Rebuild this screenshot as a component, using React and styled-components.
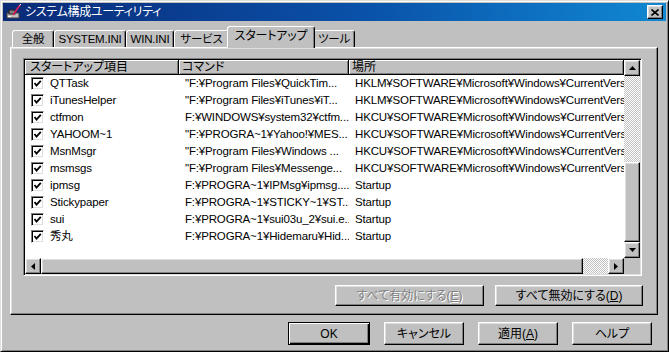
import React from 'react';
import styled, { createGlobalStyle, css } from 'styled-components';

const GlobalStyle = createGlobalStyle`
  body {
    margin: 0;
    background: #c0c0c0;
    font-family: "Liberation Sans", "Noto Sans CJK JP", sans-serif;
    font-size: 12px;
    font-feature-settings: "palt";
  }
  * { box-sizing: border-box; }
`;

const raised = css`
  border: 1px solid;
  border-color: #fff #000 #000 #fff;
  box-shadow: inset -1px -1px #808080, inset 1px 1px #dfdfdf;
  background: #c0c0c0;
`;

const Window = styled.div`
  width: 669px;
  height: 352px;
  background: #c0c0c0;
  border: 1px solid;
  border-color: #dfdfdf #000 #000 #dfdfdf;
  box-shadow: inset 1px 1px #fff, inset -1px -1px #808080;
  padding: 2px;
  display: flex;
  flex-direction: column;
`;

const TitleBar = styled.div`
  height: 18px;
  display: flex;
  align-items: center;
  padding: 0 3px 0 3px;
  background: linear-gradient(to right, #0a2a78 0%, #0a52aa 55%, #1088d2 100%);
  color: #fff;
  font-size: 12px;
  line-height: 18px;
  gap: 3px;
`;

const TitleText = styled.span`
  flex: 1;
  white-space: nowrap;
  letter-spacing: -0.3px;
`;

const CloseButton = styled.div`
  ${raised};
  width: 16px;
  height: 14px;
  display: flex;
  align-items: center;
  justify-content: center;
`;

const Body = styled.div`
  flex: 1;
  display: flex;
  flex-direction: column;
  padding: 4px 8px 0 7px;
`;

const TabStrip = styled.div`
  height: 22px;
  display: flex;
  align-items: flex-end;
  padding-left: 2px;
`;

const Tab = styled.div`
  width: ${p => p.$w}px;
  height: 17px;
  border: 1px solid;
  border-color: #fff #000 transparent #fff;
  border-bottom: none;
  border-radius: 3px 3px 0 0;
  box-shadow: inset -1px 0 #808080;
  background: #c0c0c0;
  display: flex;
  align-items: center;
  justify-content: center;
  white-space: nowrap;
  line-height: 14px;
  font-size: 11.5px;
  letter-spacing: -0.2px;
  ${p => p.$active && css`
    position: relative;
    z-index: 2;
    height: 22px;
    margin: 0 -2px -1px -2px;
    width: ${p.$w + 4}px;
    padding-bottom: 3px;
    font-size: 12px;
  `}
`;

const Panel = styled.div`
  height: 268px;
  border: 1px solid;
  border-color: #fff #000 #000 #fff;
  box-shadow: inset -1px -1px #808080, inset 1px 1px #dfdfdf;
  padding: 10px 0 0 12px;
  display: flex;
  flex-direction: column;
`;

const ListView = styled.div`
  width: 619px;
  height: 218px;
  border: 1px solid;
  border-color: #808080 #fff #fff #808080;
  box-shadow: inset 1px 1px #000, inset -1px -1px #dfdfdf;
  padding: 1px;
  background: #fff;
  display: grid;
  grid-template-columns: 1fr 16px;
  grid-template-rows: 1fr 16px;
`;

const ListContent = styled.div`
  overflow: hidden;
  display: flex;
  flex-direction: column;
`;

const HeaderRow = styled.div`
  height: 15px;
  display: grid;
  grid-template-columns: 154px 170px minmax(0, 1fr);
  flex: none;
`;

const HeaderCell = styled.div`
  background: #c0c0c0;
  border-right: 1px solid #000;
  border-bottom: 1px solid #000;
  box-shadow: inset 1px 1px #fff, inset -1px -1px #808080;
  padding-left: ${p => p.$pad}px;
  line-height: 14px;
  white-space: nowrap;
  overflow: hidden;
`;

const Row = styled.div`
  height: 17px;
  display: grid;
  grid-template-columns: 154px 170px minmax(0, 1fr);
  align-items: center;
  flex: none;
  color: #000;
  font-size: 11.5px;
  letter-spacing: -0.15px;
`;

const Cell = styled.div`
  min-width: 0;
  display: flex;
  align-items: center;
  gap: 6px;
  padding-left: 6px;
  white-space: nowrap;
  overflow: hidden;
  line-height: 15px;
`;

const CheckBox = styled.div`
  width: 13px;
  height: 13px;
  flex: none;
  border: 1px solid;
  border-color: #808080 #fff #fff #808080;
  box-shadow: inset 1px 1px #000, inset -1px -1px #dfdfdf;
  background: #fff;
  display: flex;
  align-items: center;
  justify-content: center;
`;

const VScroll = styled.div`
  display: flex;
  flex-direction: column;
`;

const HScroll = styled.div`
  display: flex;
`;

const ScrollButton = styled.div`
  ${raised};
  width: 16px;
  height: 16px;
  flex: none;
  display: flex;
  align-items: center;
  justify-content: center;
`;

const Track = styled.div`
  flex: 1;
  background: repeating-conic-gradient(#c0c0c0 0 25%, #fff 0 50%) 0 0 / 2px 2px;
`;

const Thumb = styled.div`
  ${raised};
  flex: none;
  ${p => p.$vertical ? css`height: ${p.$size}px;` : css`width: ${p.$size}px;`}
`;

const Corner = styled.div`
  background: #c0c0c0;
`;

const ActionRow = styled.div`
  width: 620px;
  margin-top: 9px;
  display: flex;
  justify-content: flex-end;
  gap: 11px;
`;

const Button = styled.div`
  ${raised};
  width: ${p => p.$w}px;
  height: ${p => p.$h}px;
  display: flex;
  align-items: center;
  justify-content: center;
  white-space: nowrap;
  line-height: 14px;
  color: ${p => (p.$disabled ? '#808080' : '#000')};
  text-shadow: ${p => (p.$disabled ? '1px 1px #fff' : 'none')};
  ${p => p.$default && css`
    border-color: #000;
    box-shadow: inset 1px 1px #fff, inset -1px -1px #000, inset -2px -2px #808080;
  `}
`;

const Footer = styled.div`
  margin-top: 7px;
  display: flex;
  justify-content: flex-end;
  gap: 14px;
  padding-right: 6px;
`;

const Key = styled.span`
  text-decoration: underline;
`;

const Arrow = ({ dir }) => {
  const pts = {
    up: '0,4 7,4 3.5,0',
    down: '0,0 7,0 3.5,4',
    left: '4,0 4,7 0,3.5',
    right: '0,0 0,7 4,3.5',
  }[dir];
  const vertical = dir === 'up' || dir === 'down';
  return (
    <svg width={vertical ? 7 : 4} height={vertical ? 4 : 7} viewBox={vertical ? '0 0 7 4' : '0 0 4 7'}>
      <polygon points={pts} fill="#000" />
    </svg>
  );
};

const Check = () => (
  <svg width="9" height="9" viewBox="0 0 9 9">
    <polyline points="1.5,4 3.5,6.5 7.8,1.8" fill="none" stroke="#000" strokeWidth="1.8" />
  </svg>
);

const AppIcon = () => (
  <svg width="16" height="16" viewBox="0 0 16 16">
    <rect x="1" y="9" width="12" height="5" fill="#c0c0c0" stroke="#404040" strokeWidth="1" />
    <rect x="3" y="6" width="6" height="4" fill="#808080" stroke="#202020" strokeWidth="1" />
    <rect x="2" y="12" width="3" height="1" fill="#fff" />
    <line x1="7" y1="11" x2="14" y2="1" stroke="#e0205a" strokeWidth="1.6" />
    <line x1="13.5" y1="1.5" x2="15" y2="0" stroke="#fff" strokeWidth="1" />
  </svg>
);

const CloseGlyph = () => (
  <svg width="8" height="7" viewBox="0 0 8 7">
    <path d="M0.5 0.5 L7.5 6.5 M7.5 0.5 L0.5 6.5" stroke="#000" strokeWidth="1.6" />
  </svg>
);

const HKLM = 'HKLM¥SOFTWARE¥Microsoft¥Windows¥CurrentVersion¥Run';
const HKCU = 'HKCU¥SOFTWARE¥Microsoft¥Windows¥CurrentVersion¥Run';

const items = [
  ['QTTask', '"F:¥Program Files¥QuickTim...', HKLM],
  ['iTunesHelper', '"F:¥Program Files¥iTunes¥iT...', HKLM],
  ['ctfmon', 'F:¥WINDOWS¥system32¥ctfm...', HKCU],
  ['YAHOOM~1', '"F:¥PROGRA~1¥Yahoo!¥MES...', HKCU],
  ['MsnMsgr', '"F:¥Program Files¥Windows ...', HKCU],
  ['msmsgs', '"F:¥Program Files¥Messenge...', HKCU],
  ['ipmsg', 'F:¥PROGRA~1¥IPMsg¥ipmsg....', 'Startup'],
  ['Stickypaper', 'F:¥PROGRA~1¥STICKY~1¥ST...', 'Startup'],
  ['sui', 'F:¥PROGRA~1¥sui03u_2¥sui.e...', 'Startup'],
  ['秀丸', 'F:¥PROGRA~1¥Hidemaru¥Hid...', 'Startup'],
];

const tabs = [
  ['全般', 42],
  ['SYSTEM.INI', 72],
  ['WIN.INI', 48],
  ['サービス', 55],
  ['スタートアップ', 84, true],
  ['ツール', 42],
];

export default function App() {
  return (
    <>
      <GlobalStyle />
      <Window>
        <TitleBar>
          <AppIcon />
          <TitleText>システム構成ユーティリティ</TitleText>
          <CloseButton><CloseGlyph /></CloseButton>
        </TitleBar>
        <Body>
          <TabStrip>
            {tabs.map(([label, w, active]) => (
              <Tab key={label} $w={w} $active={active}>{label}</Tab>
            ))}
          </TabStrip>
          <Panel>
            <ListView>
              <ListContent>
                <HeaderRow>
                  <HeaderCell $pad={5}>スタートアップ項目</HeaderCell>
                  <HeaderCell $pad={3}>コマンド</HeaderCell>
                  <HeaderCell $pad={3}>場所</HeaderCell>
                </HeaderRow>
                {items.map(([name, cmd, loc]) => (
                  <Row key={name}>
                    <Cell>
                      <CheckBox><Check /></CheckBox>
                      {name}
                    </Cell>
                    <Cell>{cmd}</Cell>
                    <Cell>{loc}</Cell>
                  </Row>
                ))}
              </ListContent>
              <VScroll>
                <ScrollButton><Arrow dir="up" /></ScrollButton>
                <Track />
                <Thumb $vertical $size={80} />
                <ScrollButton><Arrow dir="down" /></ScrollButton>
              </VScroll>
              <HScroll>
                <ScrollButton><Arrow dir="left" /></ScrollButton>
                <Thumb $size={542} />
                <Track />
                <ScrollButton><Arrow dir="right" /></ScrollButton>
              </HScroll>
              <Corner />
            </ListView>
            <ActionRow>
              <Button $w={149} $h={21} $disabled>すべて有効にする(<Key>E</Key>)</Button>
              <Button $w={148} $h={21}>すべて無効にする(<Key>D</Key>)</Button>
            </ActionRow>
          </Panel>
          <Footer>
            <Button $w={82} $h={23} $default>OK</Button>
            <Button $w={80} $h={23}>キャンセル</Button>
            <Button $w={80} $h={23}>適用(<Key>A</Key>)</Button>
            <Button $w={80} $h={23}>ヘルプ</Button>
          </Footer>
        </Body>
      </Window>
    </>
  );
}
